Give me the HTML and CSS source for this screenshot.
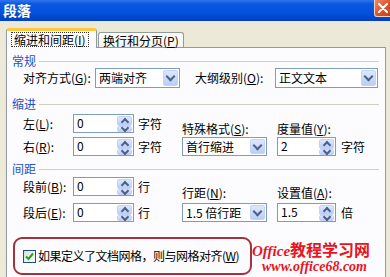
FILE: index.html
```html
<!DOCTYPE html>
<html lang="zh-CN">
<head>
    <meta charset="UTF-8">
    <title>段落</title>
    <link rel="stylesheet" href="styles.css">
</head>
<body>
    <div class="titlebar">
        <span class="title">段落</span>
        <span class="close">
            <svg width="10" height="10" viewBox="0 0 10 10"><path d="M1 1 L9 9 M9 1 L1 9" stroke="#fff" stroke-width="2" stroke-linecap="round"/></svg>
        </span>
    </div>

    <div class="tabs">
        <div class="tab active"><span class="focus">缩进和间距(<u>I</u>)</span></div>
        <div class="tab">换行和分页(<u>P</u>)</div>
    </div>

    <div class="panel">
        <div class="group first">常规</div>
        <div class="row-general">
            <span class="lbl lbl-align">对齐方式(<u>G</u>):</span>
            <div class="select sel-align"><span>两端对齐</span><i class="drop"></i></div>
            <span class="lbl lbl-outline">大纲级别(<u>O</u>):</span>
            <div class="select sel-outline"><span>正文文本</span><i class="drop"></i></div>
        </div>

        <!-- 缩进 -->
        <div class="group indent-title">缩进</div>
        <div class="grid indent">
            <span class="lbl">左(<u>L</u>):</span>
            <div class="spin"><span class="val">0</span><span class="spin-btns"><i class="up"></i><i class="down"></i></span></div>
            <span class="unit">字符</span>
            <span class="lbl top-lbl">特殊格式(<u>S</u>):</span>
            <span class="lbl top-lbl wide">度量值(<u>Y</u>):</span>

            <span class="lbl">右(<u>R</u>):</span>
            <div class="spin"><span class="val">0</span><span class="spin-btns"><i class="up"></i><i class="down"></i></span></div>
            <span class="unit">字符</span>
            <div class="select sel-small"><span>首行缩进</span><i class="drop"></i></div>
            <div class="spin spin-small"><span class="val">2</span><span class="spin-btns"><i class="up"></i><i class="down"></i></span></div>
            <span class="unit unit-right">字符</span>
        </div>

        <!-- 间距 -->
        <div class="group spacing-title">间距</div>
        <div class="grid spacing">
            <span class="lbl">段前(<u>B</u>):</span>
            <div class="spin"><span class="val">0</span><span class="spin-btns"><i class="up"></i><i class="down"></i></span></div>
            <span class="unit">行</span>
            <span class="lbl top-lbl">行距(<u>N</u>):</span>
            <span class="lbl top-lbl wide">设置值(<u>A</u>):</span>

            <span class="lbl">段后(<u>E</u>):</span>
            <div class="spin"><span class="val">0</span><span class="spin-btns"><i class="up"></i><i class="down"></i></span></div>
            <span class="unit">行</span>
            <div class="select sel-small"><span>1.5 倍行距</span><i class="drop"></i></div>
            <div class="spin spin-small"><span class="val">1.5</span><span class="spin-btns"><i class="up"></i><i class="down"></i></span></div>
            <span class="unit unit-right">倍</span>
        </div>

        <div class="bottom">
            <div class="snap-box">
                <span class="checkbox">
                    <svg width="9" height="9" viewBox="0 0 9 9"><path d="M1 4.5 L3.5 7 L8 1.5" fill="none" stroke="#21a121" stroke-width="2"/></svg>
                </span>
                <span class="snap-text">如果定义了文档网格，则与网格对齐(<u>W</u>)</span>
            </div>
            <div class="watermark">
                <div class="wm-top"><span class="wm-en">Office</span><span class="wm-cn">教程学习网</span></div>
                <div class="wm-url">www.office68.com</div>
            </div>
        </div>
    </div>
</body>
</html>
```

FILE: styles.css
```css
* {
    margin: 0;
    padding: 0;
    box-sizing: border-box;
}

body {
    width: 390px;
    height: 277px;
    overflow: hidden;
    background-color: #ece9d8;
    font-family: "Noto Sans CJK SC", "Liberation Sans", sans-serif;
    font-size: 12px;
    line-height: 14px;
    color: #000;
}

u {
    text-decoration: underline;
    text-underline-offset: 1px;
}

/* Title bar */
.titlebar {
    height: 21px;
    display: flex;
    justify-content: space-between;
    align-items: flex-start;
    background: linear-gradient(#2f74ee 0, #0a58e2 4px, #0550da 60%, #0040c2 100%);
}

.title {
    color: white;
    font-weight: 700;
    font-size: 14px;
    line-height: 16px;
    padding: 2px 0 0 3px;
}

.close {
    width: 17px;
    height: 17px;
    margin-right: -1px;
    display: flex;
    align-items: center;
    justify-content: center;
    background: linear-gradient(135deg, #f08a62, #d9502a 60%, #c4421e);
    border: 1px solid #f3d3c4;
    border-top: none;
    border-radius: 0 0 0 3px;
}

/* Tabs */
.tabs {
    display: flex;
    align-items: flex-end;
    height: 19px;
    margin-top: 7px;
    padding-left: 6px;
}

.tab {
    height: 15px;
    margin-left: 1px;
    padding: 1px 4px 0;
    line-height: 13px;
    background: linear-gradient(#fefefe, #f4f3ee);
    border: 1px solid #919b9c;
    border-bottom: none;
    border-radius: 3px 3px 0 0;
    white-space: nowrap;
}

.tab.active {
    position: relative;
    z-index: 1;
    width: 91px;
    height: 20px;
    margin: 0 0 -1px 0;
    padding: 1px 0 0 4px;
    background: #fcfcfe;
    border-top: 3px solid #ffc83c;
    line-height: 13px;
}

.tab:not(.active) {
    width: 86px;
}

.focus {
    display: inline-block;
    padding: 0 2px;
    border: 1px dotted #333;
    line-height: 13px;
}

/* Panel */
.panel {
    width: 380px;
    height: 240px;
    margin-left: 6px;
    background: #fcfcfe;
    border: 1px solid #919b9c;
}

.group {
    display: flex;
    align-items: center;
    gap: 3px;
    padding: 0 6px 0 5px;
    color: #1f50c8;
}

.group::after {
    content: "";
    flex: 1;
    border-top: 1px solid #d0d0bf;
}

.group.first {
    margin-top: 6px;
}

.indent-title {
    margin-top: 9px;
}

.spacing-title {
    margin-top: 6px;
}

.row-general {
    display: flex;
    align-items: center;
    height: 20px;
    padding-left: 16px;
}

.lbl-align {
    width: 72px;
}

.lbl-outline {
    width: 80px;
    margin-left: 15px;
}

.lbl {
    white-space: nowrap;
}

/* Combo box */
.select {
    display: flex;
    align-items: stretch;
    justify-content: space-between;
    height: 20px;
    background: white;
    border: 1px solid #7f9db9;
}

.select span {
    padding-left: 3px;
    line-height: 17px;
    white-space: nowrap;
}

.sel-align {
    width: 85px;
}

.sel-outline {
    width: 103px;
}

.sel-small {
    width: 85px;
    height: 19px;
}

.drop {
    width: 15px;
    margin: 1px;
    display: flex;
    align-items: center;
    justify-content: center;
    background: linear-gradient(#dde8fe, #b9cdf8);
    border: 1px solid #c3d3fd;
    border-radius: 2px;
}

.drop::before {
    content: "";
    width: 5px;
    height: 5px;
    margin-top: -3px;
    border-right: 2px solid #4d6185;
    border-bottom: 2px solid #4d6185;
    transform: rotate(45deg);
}

/* Grids */
.grid {
    display: grid;
    grid-template-columns: 50px 61px 48px 95px 59px auto;
    grid-template-rows: 19px 19px;
    align-items: center;
    padding-left: 16px;
}

.indent {
    margin-top: 3px;
    row-gap: 4px;
}

.spacing {
    margin-top: 1px;
    row-gap: 7px;
}

.top-lbl {
    align-self: end;
    margin-bottom: -3px;
}

.spacing .top-lbl {
    margin-bottom: -4px;
}

.wide {
    grid-column: 5 / 7;
}

/* Spin box */
.spin {
    display: flex;
    height: 19px;
    width: 61px;
    background: white;
    border: 1px solid #7f9db9;
}

.spin-small {
    width: 59px;
}

.val {
    flex: 1;
    padding-left: 3px;
    line-height: 16px;
}

.spin-btns {
    width: 15px;
    margin: 1px;
    display: flex;
    flex-direction: column;
}

.spin-btns i {
    flex: 1;
    display: flex;
    align-items: center;
    justify-content: center;
    background: linear-gradient(#dde8fe, #b9cdf8);
    border: 1px solid #c3d3fd;
    border-radius: 2px;
}

.spin-btns i::before {
    content: "";
    width: 4px;
    height: 4px;
    border-left: 2px solid #4d6185;
    border-top: 2px solid #4d6185;
}

.spin-btns .up::before {
    margin-top: 2px;
    transform: rotate(45deg);
}

.spin-btns .down::before {
    margin-top: -2px;
    transform: rotate(225deg);
}

.unit {
    padding-left: 4px;
}

.unit-right {
    padding-left: 5px;
}

/* Snap to grid */
.bottom {
    display: flex;
    align-items: flex-start;
    margin-top: 15px;
    padding-left: 6px;
}

.snap-box {
    display: flex;
    align-items: center;
    gap: 2px;
    width: 239px;
    height: 38px;
    padding-left: 8px;
    border: 2px solid #a3323e;
    border-radius: 9px;
}

.checkbox {
    width: 13px;
    height: 13px;
    display: flex;
    align-items: center;
    justify-content: center;
    border: 1px solid #1c5180;
    background: linear-gradient(135deg, #dcdcd7, #ffffff);
}

.snap-text {
    white-space: nowrap;
    letter-spacing: -0.5px;
}

.watermark {
    margin: 4px 0 0 0;
    color: #e8141e;
    font-weight: 700;
    font-style: italic;
}

.wm-top {
    line-height: 17px;
    white-space: nowrap;
}

.wm-en {
    font-family: "Liberation Serif", serif;
    font-size: 15px;
}

.wm-cn {
    font-size: 16px;
    font-style: normal;
}

.wm-url {
    padding-left: 10px;
    font-family: "Liberation Serif", serif;
    font-size: 14px;
    line-height: 13px;
}
```
